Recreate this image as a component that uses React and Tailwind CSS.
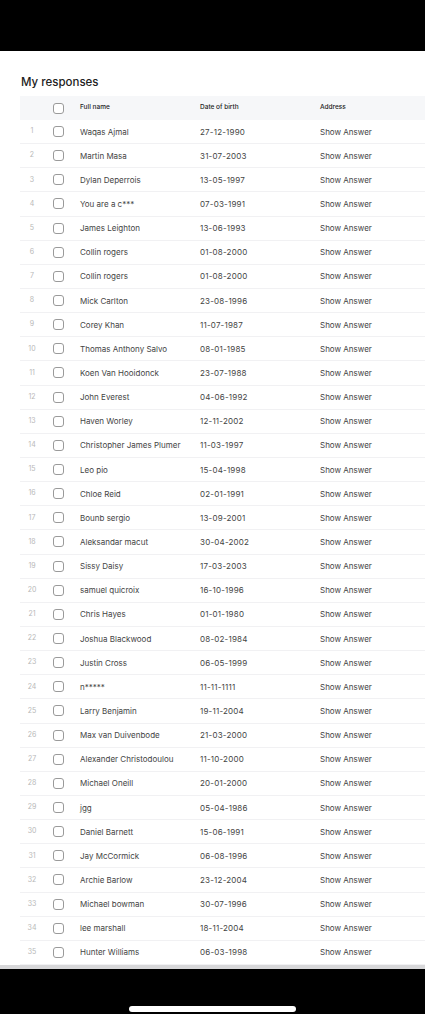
import React from "react";

const rows = [
  ["Waqas Ajmal", "27-12-1990"],
  ["Martin Masa", "31-07-2003"],
  ["Dylan Deperrois", "13-05-1997"],
  ["You are a c***", "07-03-1991"],
  ["James Leighton", "13-06-1993"],
  ["Collin rogers", "01-08-2000"],
  ["Collin rogers", "01-08-2000"],
  ["Mick Carlton", "23-08-1996"],
  ["Corey Khan", "11-07-1987"],
  ["Thomas Anthony Salvo", "08-01-1985"],
  ["Koen Van Hooidonck", "23-07-1988"],
  ["John Everest", "04-06-1992"],
  ["Haven Worley", "12-11-2002"],
  ["Christopher James Plumer", "11-03-1997"],
  ["Leo pio", "15-04-1998"],
  ["Chloe Reid", "02-01-1991"],
  ["Bounb sergio", "13-09-2001"],
  ["Aleksandar macut", "30-04-2002"],
  ["Sissy Daisy", "17-03-2003"],
  ["samuel quicroix", "16-10-1996"],
  ["Chris Hayes", "01-01-1980"],
  ["Joshua Blackwood", "08-02-1984"],
  ["Justin Cross", "06-05-1999"],
  ["n*****", "11-11-1111"],
  ["Larry Benjamin", "19-11-2004"],
  ["Max van Duivenbode", "21-03-2000"],
  ["Alexander Christodoulou", "11-10-2000"],
  ["Michael Oneill", "20-01-2000"],
  ["jgg", "05-04-1986"],
  ["Daniel Barnett", "15-06-1991"],
  ["Jay McCormick", "06-08-1996"],
  ["Archie Barlow", "23-12-2004"],
  ["Michael bowman", "30-07-1996"],
  ["lee marshall", "18-11-2004"],
  ["Hunter Williams", "06-03-1998"],
];

function Box() {
  return <div className="w-[11px] h-[11px] rounded-[3px] border border-[#9a9a9a] bg-white" />;
}

export default function App() {
  return (
    <div className="w-[425px] h-[1014px] bg-black flex flex-col overflow-hidden" style={{ fontFamily: "Inter, 'Liberation Sans', sans-serif" }}>
      <div className="h-[51px] shrink-0 bg-black" />
      <div className="bg-white shrink-0">
        <div className="pl-[21px] pt-[24px] pb-[7px] text-[11.5px] leading-[14px] text-[#222] font-medium">My responses</div>
        <div className="ml-[20px]">
          <div className="h-[24px] bg-[#f6f7f9] flex items-center text-[6.5px] font-medium text-[#222]">
            <div className="w-[24px]" />
            <div className="w-[36px] pl-[9px] flex items-center"><Box /></div>
            <div className="w-[120px]">Full name</div>
            <div className="w-[120px]">Date of birth</div>
            <div className="flex-1">Address</div>
          </div>
          {rows.map(([name, dob], i) => (
            <div key={i} className="h-[24.15px] flex items-center border-b border-[#f1f1f3] text-[8px] text-[#444]">
              <div className="w-[24px] text-center text-[7px] text-[#b8b8b8]">{i + 1}</div>
              <div className="w-[36px] pl-[9px] flex items-center"><Box /></div>
              <div className="w-[120px] whitespace-nowrap">{name}</div>
              <div className="w-[120px] tracking-[0.2px]">{dob}</div>
              <div className="flex-1">Show Answer</div>
            </div>
          ))}
        </div>
      </div>
      <div className="h-[4px] shrink-0 bg-[#d7d7d9]" />
      <div className="flex-1 flex flex-col justify-end items-center pb-[1px]">
        <div className="w-[167px] h-[6px] rounded-full bg-white mb-[1px]" />
      </div>
    </div>
  );
}
